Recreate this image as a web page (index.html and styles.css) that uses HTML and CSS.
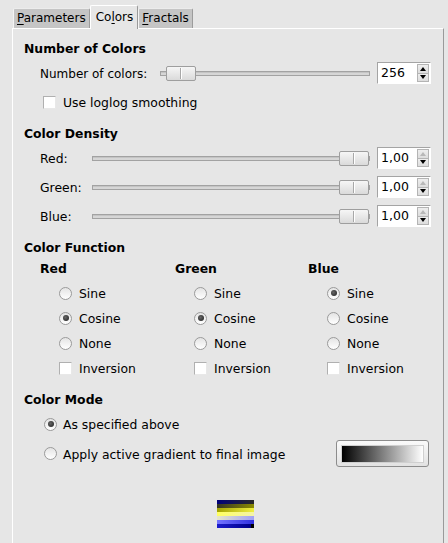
FILE: index.html
```html
<!DOCTYPE html>
<html>
<head>
<meta charset="utf-8">
<title>Colors</title>
<link rel="stylesheet" href="styles.css">
</head>
<body>
<div class="tabs">
  <div class="tab"><u>P</u>arameters</div>
  <div class="tab active">Co<u>l</u>ors</div>
  <div class="tab"><u>F</u>ractals</div>
</div>
<div class="panel">
  <div class="heading h-first">Number of Colors</div>
  <div class="row row-first">
    <span class="label label-wide txt">Number of colors:</span>
    <div class="slider"><div class="track"></div><div class="handle at-min"><span class="grip"></span></div></div>
    <div class="spin"><span class="spin-value">256</span><div class="spin-btns"><span class="sbtn"><i class="tri-up"></i></span><span class="sbtn"><i class="tri-down"></i></span></div></div>
  </div>
  <div class="check-row">
    <span class="check"></span><span class="txt">Use loglog smoothing</span>
  </div>

  <div class="heading h-sec">Color Density</div>
  <div class="row row-d1">
    <span class="label txt">Red:</span>
    <div class="slider"><div class="track"></div><div class="handle at-max"><span class="grip"></span></div></div>
    <div class="spin"><span class="spin-value">1,00</span><div class="spin-btns"><span class="sbtn"><i class="tri-up off"></i></span><span class="sbtn"><i class="tri-down"></i></span></div></div>
  </div>
  <div class="row row-d">
    <span class="label txt">Green:</span>
    <div class="slider"><div class="track"></div><div class="handle at-max"><span class="grip"></span></div></div>
    <div class="spin"><span class="spin-value">1,00</span><div class="spin-btns"><span class="sbtn"><i class="tri-up off"></i></span><span class="sbtn"><i class="tri-down"></i></span></div></div>
  </div>
  <div class="row row-d">
    <span class="label txt">Blue:</span>
    <div class="slider"><div class="track"></div><div class="handle at-max"><span class="grip"></span></div></div>
    <div class="spin"><span class="spin-value">1,00</span><div class="spin-btns"><span class="sbtn"><i class="tri-up off"></i></span><span class="sbtn"><i class="tri-down"></i></span></div></div>
  </div>

  <div class="heading h-fn">Color Function</div>
  <div class="functions">
    <div class="col">
      <div class="col-head">Red</div>
      <div class="opt"><span class="radio"></span><span class="txt">Sine</span></div>
      <div class="opt"><span class="radio on"><span class="dot"></span></span><span class="txt">Cosine</span></div>
      <div class="opt"><span class="radio"></span><span class="txt">None</span></div>
      <div class="opt"><span class="check"></span><span class="txt">Inversion</span></div>
    </div>
    <div class="col">
      <div class="col-head">Green</div>
      <div class="opt"><span class="radio"></span><span class="txt">Sine</span></div>
      <div class="opt"><span class="radio on"><span class="dot"></span></span><span class="txt">Cosine</span></div>
      <div class="opt"><span class="radio"></span><span class="txt">None</span></div>
      <div class="opt"><span class="check"></span><span class="txt">Inversion</span></div>
    </div>
    <div class="col">
      <div class="col-head">Blue</div>
      <div class="opt"><span class="radio on"><span class="dot"></span></span><span class="txt">Sine</span></div>
      <div class="opt"><span class="radio"></span><span class="txt">Cosine</span></div>
      <div class="opt"><span class="radio"></span><span class="txt">None</span></div>
      <div class="opt"><span class="check"></span><span class="txt">Inversion</span></div>
    </div>
  </div>

  <div class="heading h-mode">Color Mode</div>
  <div class="mode-opt mode-first"><span class="radio on"><span class="dot"></span></span><span class="txt">As specified above</span></div>
  <div class="mode-opt mode-grad">
    <span class="radio"></span><span class="grow txt">Apply active gradient to final image</span>
    <div class="grad-btn"><div class="grad"></div></div>
  </div>

  <div class="preview">
    <div class="stripe s1"></div>
    <div class="stripe s2"></div>
    <div class="stripe s3"></div>
    <div class="stripe s4"></div>
    <div class="stripe s5"></div>
    <div class="stripe s6"></div>
    <div class="stripe s7"></div>
  </div>
</div>
</body>
</html>
```

FILE: styles.css
```css
* { box-sizing: border-box; }
html, body { margin: 0; padding: 0; }
body {
  background: #e6e6e6;
  font-family: "DejaVu Sans", sans-serif;
  font-size: 12.4px;
  color: #000;
  width: 448px;
  height: 543px;
  overflow: hidden;
}

/* tabs */
.tabs {
  height: 28px;
  display: flex;
  align-items: flex-end;
  padding-left: 13px;
  font-size: 12px;
}
.tab {
  height: 20px;
  line-height: 19px;
  padding: 0 3px;
  background: #c5c5c5;
  border-top: 1px solid #ececec;
  border-left: 1px solid #f4f4f4;
  border-right: 1px solid #9c9c9c;
  border-radius: 2px 2px 0 0;
  white-space: nowrap;
}
.tab.active {
  height: 24px;
  line-height: 22px;
  padding: 0 4px 0 5px;
  margin-bottom: -1px;
  background: #e6e6e6;
  border-top: 1px solid #ffffff;
  border-left: 1px solid #ffffff;
  border-right: 1px solid #9a9a9a;
  position: relative;
  z-index: 1;
}
.tab u { text-decoration: underline; text-underline-offset: 2px; }

/* panel */
.panel {
  margin-left: 12px;
  width: 432px;
  height: 515px;
  border-top: 1px solid #ffffff;
  border-left: 1px solid #ffffff;
  border-right: 1px solid #9a9a9a;
  padding: 0 12px 0 11px;
  display: flex;
  flex-direction: column;
}

.txt { padding-top: 1px; }

.heading {
  height: 20px;
  line-height: 21px;
  font-weight: bold;
}
.h-first { margin-top: 9px; }
.h-sec { margin-top: 11px; }
.h-fn { margin-top: 10px; }
.h-mode { margin-top: 11px; }

/* slider rows */
.row {
  height: 22px;
  display: flex;
  align-items: center;
  padding-left: 16px;
}
.row-first { margin-top: 4px; }
.row-d1 { margin-top: 4px; }
.row-d { margin-top: 7px; }

.label { width: 52px; flex: none; white-space: nowrap; }
.label-wide { width: 120px; font-size: 12px; }

.slider {
  flex: 1;
  height: 22px;
  margin-right: 7px;
  position: relative;
  display: flex;
  align-items: center;
}
.track {
  flex: 1;
  height: 5px;
  border: 1px solid #a2a2a2;
  background: #d6d6d6;
  box-shadow: inset 0 1px 0 #c4c4c4;
}
.handle {
  position: absolute;
  top: 4px;
  width: 30px;
  height: 15px;
  border: 1px solid #9e9e9e;
  border-radius: 2px;
  background: linear-gradient(#f6f6f6, #dadada);
  display: flex;
  align-items: center;
  justify-content: center;
}
.handle.at-min { left: 6px; }
.handle.at-max { right: 1px; }
.grip {
  width: 2px;
  height: 11px;
  border-left: 1px solid #a8a8a8;
  border-right: 1px solid #ffffff;
}

/* spin button */
.spin {
  width: 54px;
  height: 22px;
  flex: none;
  display: flex;
  background: #ffffff;
  border: 1px solid;
  border-color: #a4a4a4 #ffffff #ffffff #a4a4a4;
}
.spin-value {
  flex: 1;
  padding-left: 3px;
  line-height: 20px;
  font-size: 12.5px;
}
.spin-btns {
  width: 12px;
  margin: 1px 1px 1px 0;
  display: flex;
  flex-direction: column;
}
.sbtn {
  flex: 1;
  background: linear-gradient(#eeeeee, #dddddd);
  border: 1px solid #b4b4b4;
  display: flex;
  align-items: center;
  justify-content: center;
}
.sbtn + .sbtn { border-top: none; }
.tri-up, .tri-down {
  width: 0; height: 0;
  border-left: 3px solid transparent;
  border-right: 3px solid transparent;
}
.tri-up { border-bottom: 4px solid #000; }
.tri-up.off { border-bottom-color: #b8b8b8; }
.tri-down { border-top: 4px solid #000; }

/* checkbox row */
.check-row {
  margin-top: 8px;
  height: 20px;
  display: flex;
  align-items: center;
  gap: 7px;
  padding-left: 19px;
}
.check {
  width: 13px;
  height: 13px;
  flex: none;
  background: #ffffff;
  border: 1px solid;
  border-color: #b0b0b0 #e8e8e8 #e8e8e8 #b0b0b0;
}

/* radios */
.radio {
  width: 13px;
  height: 13px;
  flex: none;
  border-radius: 50%;
  border: 1px solid #9a9a9a;
  background: linear-gradient(#e4e4e4, #ffffff);
  display: flex;
  align-items: center;
  justify-content: center;
}
.dot {
  width: 6px;
  height: 6px;
  border-radius: 50%;
  background: radial-gradient(circle at 40% 40%, #666, #1e1e1e);
}

/* color function grid */
.functions {
  margin-top: 1px;
  margin-left: 16px;
  display: grid;
  grid-template-columns: 135px 133px 1fr;
}
.col {
  display: flex;
  flex-direction: column;
  gap: 5px;
}
.col-head {
  height: 20px;
  line-height: 21px;
  font-weight: bold;
}
.opt {
  height: 20px;
  display: flex;
  align-items: center;
  gap: 7px;
  padding-left: 19px;
}

/* color mode */
.mode-opt {
  display: flex;
  align-items: center;
  gap: 6px;
  padding-left: 20px;
}
.mode-first { margin-top: 5px; height: 20px; }
.mode-grad { margin-top: 6px; height: 27px; }
.grow { flex: 1; }
.grad-btn {
  width: 93px;
  height: 27px;
  margin-right: 2px;
  padding: 4px 4px 3px 4px;
  border: 1px solid #8c8c8c;
  border-radius: 3px;
  background: linear-gradient(#fafafa, #e2e2e2);
}
.grad {
  height: 100%;
  background: linear-gradient(to right, #000000, #ffffff);
  border: 1px solid #d0d0d0;
}

/* preview */
.preview {
  margin-top: 33px;
  margin-left: 193px;
  width: 37px;
  height: 28px;
  display: flex;
  flex-direction: column;
}
.stripe { height: 4px; }
.s1 { background: linear-gradient(to right, #00007a, #282828); }
.s2 { background: linear-gradient(to right, #333325, #8c8c00); }
.s3 { background: linear-gradient(to right, #a2a200, #f0f040); }
.s4 { background: linear-gradient(to right, #ffff60, #f4f4a8); }
.s5 { background: linear-gradient(to right, #e6e6c8, #a0a0f8); }
.s6 { background: linear-gradient(to right, #7474ff, #3030e0); }
.s7 { background: linear-gradient(to right, #1c1ccc, #00008a 91%, #000000 91%); }
```
